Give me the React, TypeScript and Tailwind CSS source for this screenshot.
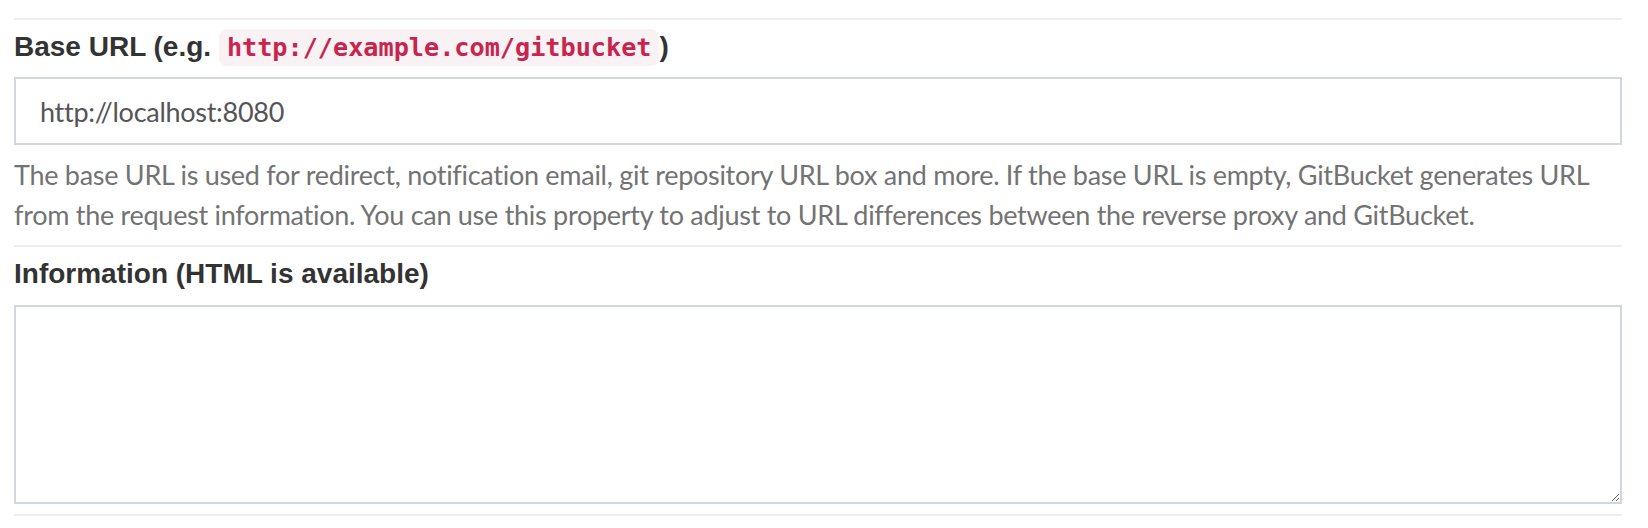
import React from 'react';

const labelCls = "block font-['Liberation_Sans',Arial,sans-serif] text-[28px] leading-[40px] font-bold text-[#333]";
const bodyFont = "font-['Lato','Liberation_Sans',sans-serif] text-[27px] tracking-[-0.28px]";

const Rule: React.FC = () => <div className="h-[2px] bg-[#eeeeee]" />;

export default function App() {
  return (
    <div className="w-[1648px] h-[528px] overflow-hidden bg-white pl-[14px] pr-[26px] pt-[18px]">
      <Rule />

      {/* Base URL */}
      <div className="mt-[7px]">
        <label className={labelCls}>
          Base URL (e.g.{' '}
          <code className="rounded-[8px] bg-[#f9f2f4] px-[8px] py-[4px] font-['DejaVu_Sans_Mono',monospace] text-[25.2px] leading-none font-bold text-[#c7254e]">
            http://example.com/gitbucket
          </code>
          )
        </label>
        <input
          type="text"
          defaultValue="http://localhost:8080"
          className={`mt-[10px] block h-[68px] w-full border-2 border-[#d2d6de] bg-white px-[24px] text-[#555] outline-none ${bodyFont}`}
        />
        <p className={`mt-[10px] leading-[40px] text-[#737373] ${bodyFont}`}>
          The base URL is used for redirect, notification email, git repository URL box and more. If the base URL is empty,
          GitBucket generates URL from the request information. You can use this property to adjust to URL differences
          between the reverse proxy and GitBucket.
        </p>
      </div>

      <div className="mt-[10px]">
        <Rule />
      </div>

      {/* Information */}
      <div className="mt-[7px]">
        <label className={labelCls}>Information (HTML is available)</label>
        <textarea
          className={`mt-[11px] block h-[199px] w-full border-2 border-[#d2d6de] bg-white px-[24px] py-[12px] text-[#555] outline-none ${bodyFont}`}
        />
      </div>

      <div className="mt-[10px]">
        <Rule />
      </div>
    </div>
  );
}
